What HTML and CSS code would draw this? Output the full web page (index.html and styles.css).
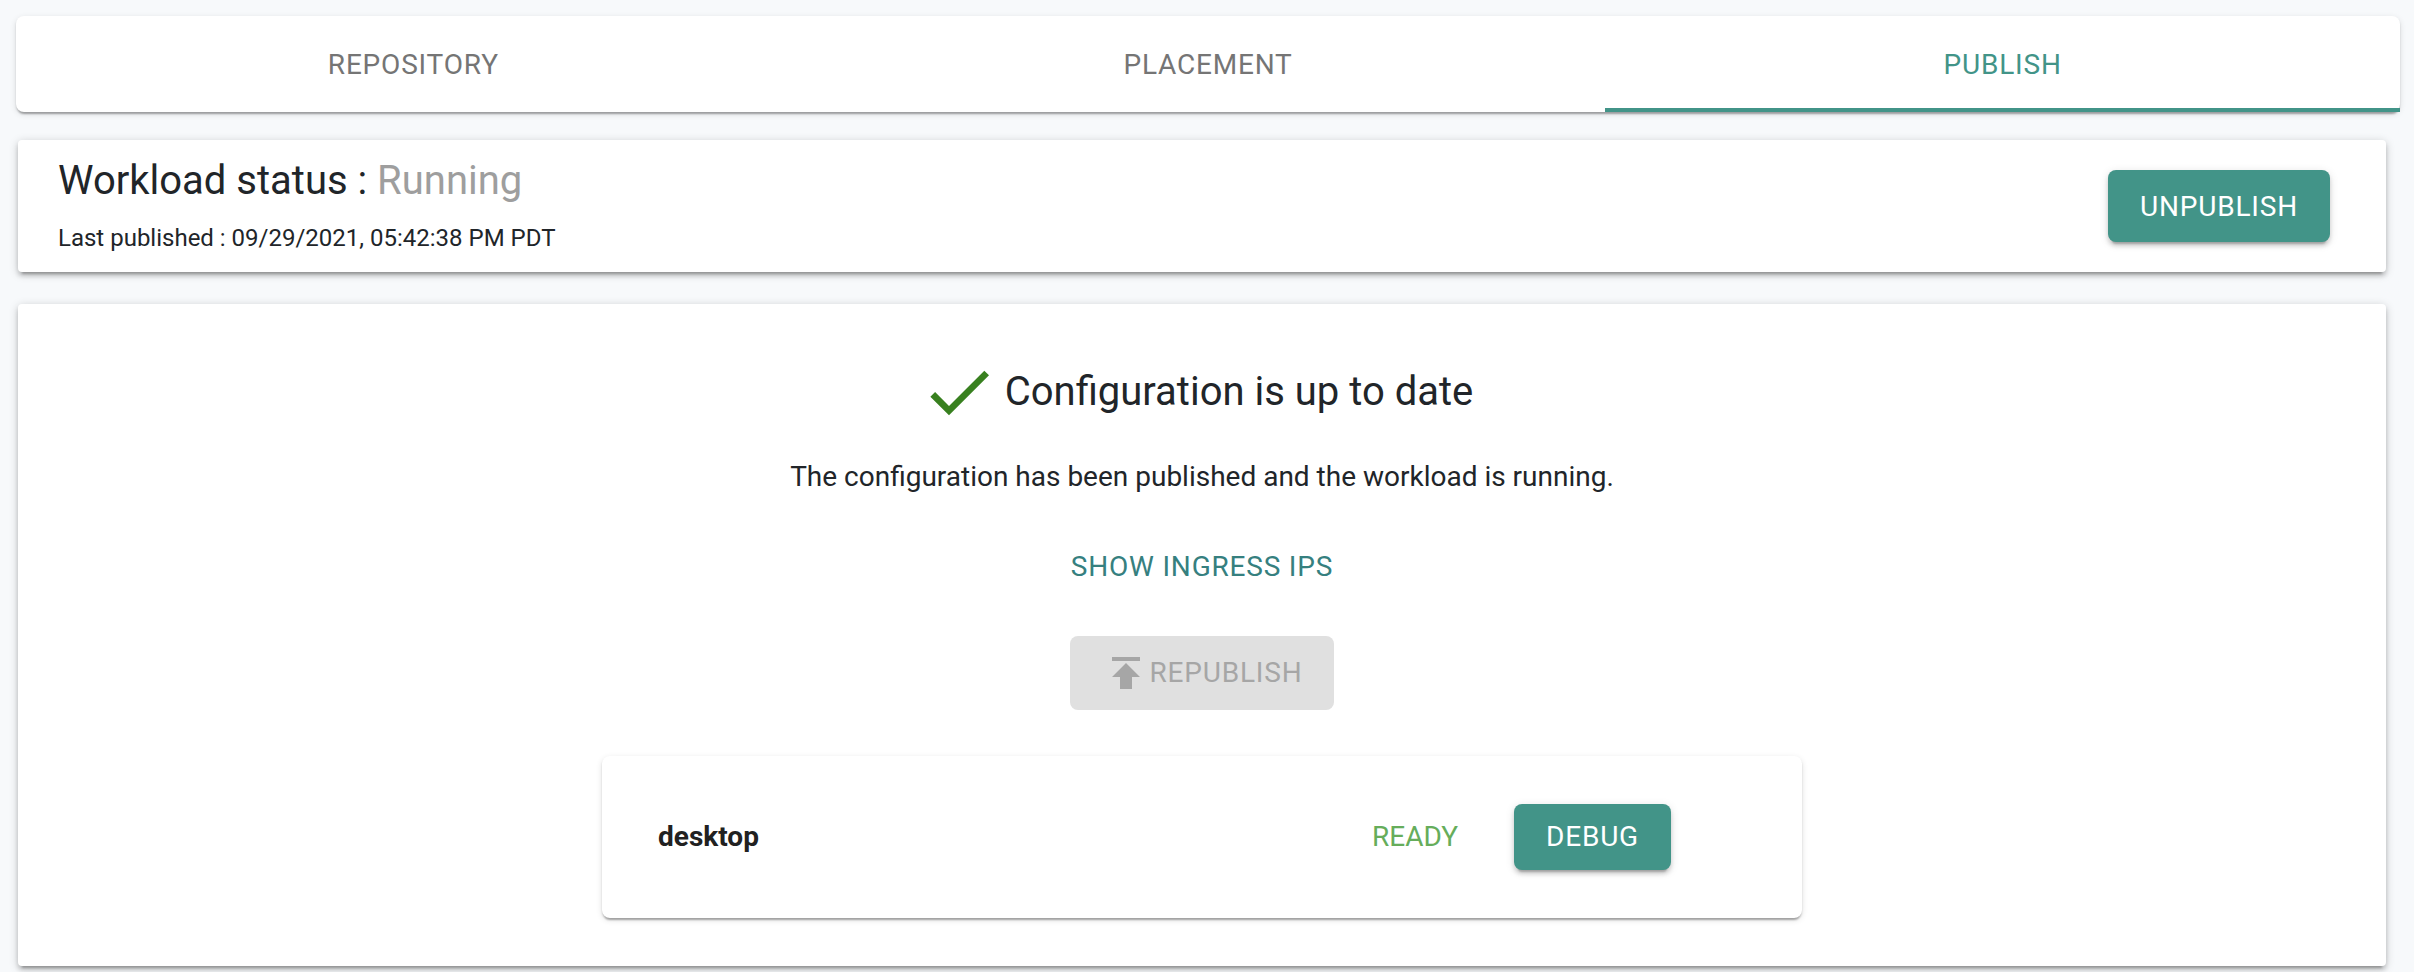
FILE: index.html
```html
<!DOCTYPE html>
<html lang="en">
<head>
<meta charset="utf-8">
<title>Workload</title>
<link rel="stylesheet" href="styles.css">
</head>
<body>
<nav class="tabs" role="tablist">
  <button class="tab" role="tab" aria-selected="false">REPOSITORY</button>
  <button class="tab" role="tab" aria-selected="false">PLACEMENT</button>
  <button class="tab tab-active" role="tab" aria-selected="true">PUBLISH</button>
</nav>
<main class="content">
  <section class="card status">
    <div>
      <h1 class="title">Workload status : <span class="state">Running</span></h1>
      <p class="published">Last published : 09/29/2021, 05:42:38 PM PDT</p>
    </div>
    <button class="button primary large">UNPUBLISH</button>
  </section>
  <section class="card config">
    <h2 class="title summary">
      <svg class="check" viewBox="0 0 24 24" aria-hidden="true"><path d="M9 16.17 4.83 12l-1.42 1.41L9 19 21 7l-1.41-1.41z"/></svg>
      Configuration is up to date
    </h2>
    <p class="message">The configuration has been published and the workload is running.</p>
    <button class="button link">SHOW INGRESS IPS</button>
    <button class="button republish" disabled>
      <svg class="upload" viewBox="0 0 24 24" aria-hidden="true"><path d="M5 4v2h14V4H5zm0 10h4v6h6v-6h4l-7-7-7 7z"/></svg>
      REPUBLISH
    </button>
    <div class="container-row">
      <strong class="name">desktop</strong>
      <span class="ready">READY</span>
      <button class="button primary">DEBUG</button>
    </div>
  </section>
</main>
</body>
</html>
```
FILE: styles.css
```css
* {
  box-sizing: border-box;
}

body {
  margin: 0;
  padding: 16px 14px 6px 16px;
  background: #f7f9fb;
  color: #212529;
  font-family: Roboto, "Liberation Sans", sans-serif;
  font-size: 28px;
  line-height: 42px;
}

h1, h2, p {
  margin: 0;
}

button {
  border: 0;
  background: none;
  font: inherit;
  letter-spacing: 0.02857em;
  cursor: pointer;
}

.tabs {
  display: grid;
  grid-template-columns: repeat(3, 1fr);
  border-radius: 8px;
  background: #fff;
  box-shadow: 0 4px 2px -2px rgba(0, 0, 0, 0.2), 0 2px 2px rgba(0, 0, 0, 0.14), 0 2px 6px rgba(0, 0, 0, 0.12);
}

.tab {
  height: 96px;
  padding: 2px 24px 0;
  color: #757575;
}

.tab-active {
  color: #429488;
  box-shadow: inset 0 -4px #429488;
}

.content {
  display: flex;
  flex-direction: column;
  gap: 32px;
  margin: 28px 14px 0 2px;
}

.card {
  border-radius: 4px;
  background: #fff;
  box-shadow: 0 6px 2px -4px rgba(0, 0, 0, 0.2), 0 4px 4px rgba(0, 0, 0, 0.14), 0 2px 10px rgba(0, 0, 0, 0.2);
}

.status {
  display: flex;
  align-items: center;
  justify-content: space-between;
  padding: 16px 56px 16px 40px;
}

.title {
  font-size: 40px;
  font-weight: 400;
  line-height: 50px;
}

.state {
  color: #9e9e9e;
}

.published {
  padding-top: 14px;
  font-size: 24px;
  line-height: 36px;
}

.button {
  height: 66px;
  padding: 0 32px;
  border-radius: 8px;
}

.large {
  height: 72px;
  padding-top: 2px;
}

.primary {
  background: #429488;
  color: #fff;
  box-shadow: 0 6px 2px -4px rgba(0, 0, 0, 0.2), 0 4px 4px rgba(0, 0, 0, 0.14), 0 2px 10px rgba(0, 0, 0, 0.12);
}

.config {
  display: flex;
  flex-direction: column;
  align-items: center;
  padding: 48px;
}

.summary {
  display: flex;
  align-items: center;
  gap: 6px;
  padding-right: 12px;
}

.check {
  width: 80px;
  height: 80px;
  fill: #38801f;
}

.message {
  margin: 24px 0 36px;
}

.link {
  color: #36807f;
}

.republish {
  display: flex;
  align-items: center;
  height: 74px;
  margin: 36px 0 46px;
  background: #e0e0e0;
  color: #a6a6a6;
  cursor: default;
}

.upload {
  width: 48px;
  height: 48px;
  fill: currentColor;
}

.container-row {
  display: flex;
  align-items: center;
  width: 100%;
  max-width: 1200px;
  padding: 48px 131px 48px 56px;
  border-radius: 8px;
  box-shadow: 0 4px 2px -2px rgba(0, 0, 0, 0.2), 0 2px 2px rgba(0, 0, 0, 0.14), 0 2px 6px rgba(0, 0, 0, 0.12);
}

.name {
  flex: 1;
  color: #212121;
}

.ready {
  margin-right: 56px;
  color: #66ad5b;
}
```
